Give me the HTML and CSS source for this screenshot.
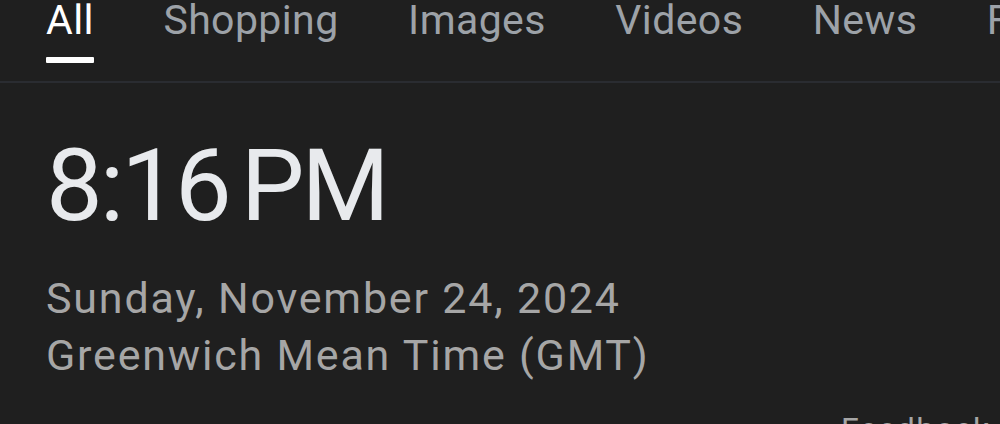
FILE: index.html
```html
<!DOCTYPE html>
<html lang="en">
<head>
  <meta charset="UTF-8">
  <meta name="viewport" content="width=device-width, initial-scale=1.0">
  <title>Time</title>
  <link rel="stylesheet" href="styles.css">
</head>
<body>
  <nav class="tabs">
    <a class="tab active" href="#">All</a>
    <a class="tab" href="#">Shopping</a>
    <a class="tab" href="#">Images</a>
    <a class="tab" href="#">Videos</a>
    <a class="tab" href="#">News</a>
    <a class="tab" href="#">Forums</a>
  </nav>

  <div class="clock">
    <div class="time">8:16 PM</div>
    <div class="date">Sunday, November 24, 2024</div>
    <div class="zone">Greenwich Mean Time (GMT)</div>
  </div>

  <div class="feedback"><a href="#">Feedback</a></div>
</body>
</html>
```

FILE: styles.css
```css
body {
  margin: 0;
  background-color: #1f1f1f;
  font-family: Roboto, "Open Sans", Arial, sans-serif;
  overflow: hidden;
}

.tabs {
  display: flex;
  gap: 69.5px;
  padding-left: 46px;
  height: 81px;
  border-bottom: 2px solid #2a2c31;
  white-space: nowrap;
  overflow: hidden;
}

.tab {
  position: relative;
  font-size: 41px;
  line-height: 40px;
  letter-spacing: 0.4px;
  color: #9da2a8;
  text-decoration: none;
}

.tab.active {
  color: #ffffff;
}

.tab.active::after {
  content: "";
  position: absolute;
  left: 0;
  right: 0;
  top: 57px;
  height: 6px;
  border-radius: 1px;
  background-color: #ffffff;
}

.clock {
  padding: 43px 0 0 46px;
}

.time {
  font-size: 101px;
  line-height: 120px;
  letter-spacing: -3px;
  word-spacing: -10px;
  color: #e8eaed;
}

.date,
.zone {
  font-size: 43px;
  line-height: 57px;
  letter-spacing: 1.8px;
  color: #a6a6a6;
}

.date {
  margin-top: 24px;
}

.feedback {
  padding: 25px 0 0 841px;
  white-space: nowrap;
}

.feedback a {
  font-size: 32px;
  line-height: 40px;
  letter-spacing: 1.5px;
  color: #a6a6a6;
  text-decoration: none;
}
```
